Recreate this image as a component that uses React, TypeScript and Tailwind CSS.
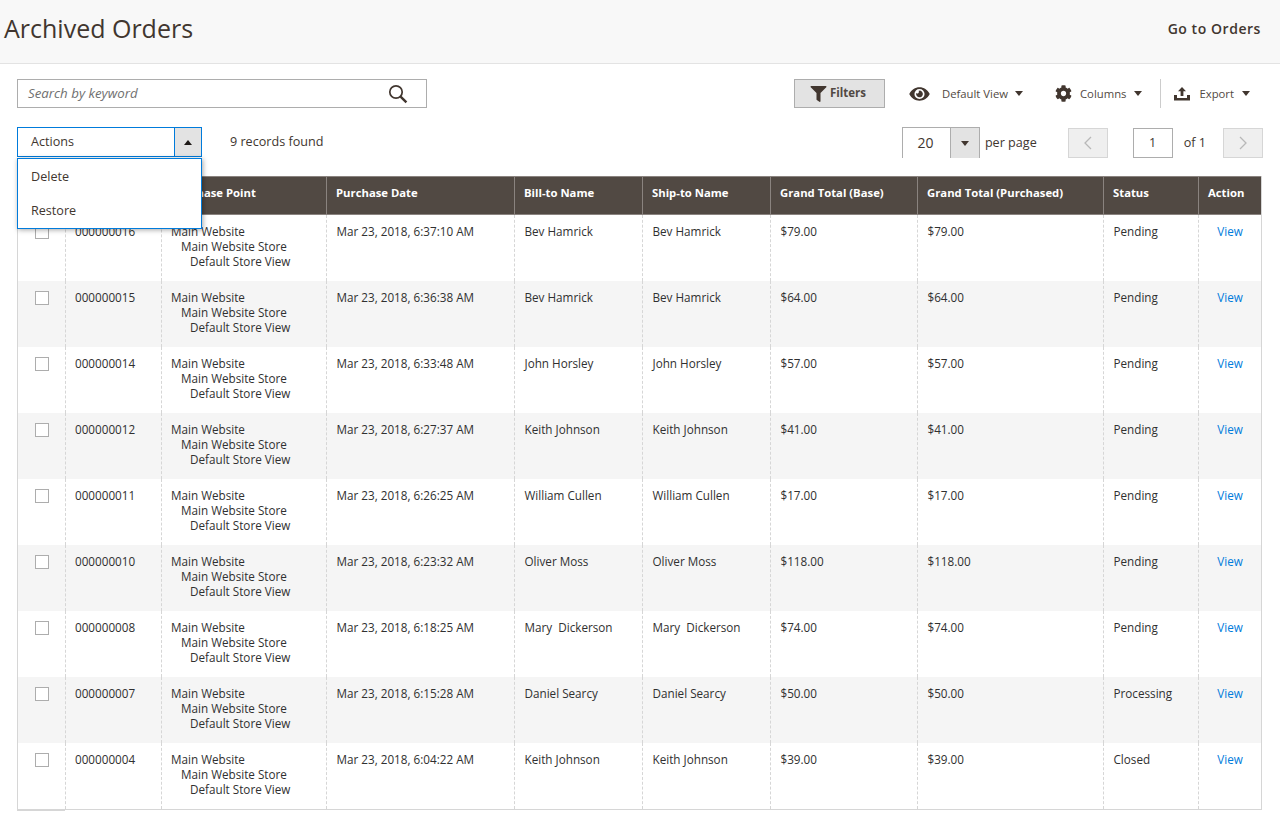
import { FaCog, FaEye, FaFilter } from "react-icons/fa";

const rows = [
  ["000000016", "Mar 23, 2018, 6:37:10 AM", "Bev Hamrick", "$79.00", "Pending"],
  ["000000015", "Mar 23, 2018, 6:36:38 AM", "Bev Hamrick", "$64.00", "Pending"],
  ["000000014", "Mar 23, 2018, 6:33:48 AM", "John Horsley", "$57.00", "Pending"],
  ["000000012", "Mar 23, 2018, 6:27:37 AM", "Keith Johnson", "$41.00", "Pending"],
  ["000000011", "Mar 23, 2018, 6:26:25 AM", "William Cullen", "$17.00", "Pending"],
  ["000000010", "Mar 23, 2018, 6:23:32 AM", "Oliver Moss", "$118.00", "Pending"],
  ["000000008", "Mar 23, 2018, 6:18:25 AM", "Mary  Dickerson", "$74.00", "Pending"],
  ["000000007", "Mar 23, 2018, 6:15:28 AM", "Daniel Searcy", "$50.00", "Processing"],
  ["000000004", "Mar 23, 2018, 6:04:22 AM", "Keith Johnson", "$39.00", "Closed"],
];

const headers = [
  "",
  "ID",
  "Purchase Point",
  "Purchase Date",
  "Bill-to Name",
  "Ship-to Name",
  "Grand Total (Base)",
  "Grand Total (Purchased)",
  "Status",
  "Action",
];

function Caret() {
  return (
    <span className="inline-block w-0 h-0 border-x-[4px] border-x-transparent border-t-[5px] border-t-[#41362f]" />
  );
}

function Cell({ children, tight }: { children?: React.ReactNode; tight?: boolean }) {
  return (
    <td
      className={`align-top pt-[9px] border-l border-dashed border-l-[#d6d6d6] whitespace-pre ${tight ? "px-[9px]" : "px-[9.5px]"}`}>
      {children}
    </td>
  );
}

export default function App() {
  return (
    <div
      className="w-[1280px] h-[834px] overflow-hidden bg-white text-[11.7px] leading-[15px] text-[#303030]"
      style={{ fontFamily: '"Open Sans", sans-serif' }}>
      <header className="h-[64px] bg-[#f8f8f8] border-b border-[#e3e3e3] flex items-center justify-between pl-[4px] pr-[19px]">
        <h1 className="text-[25px] leading-[38px] text-[#41362f] -mt-[7px]">
          Archived Orders
        </h1>
        <a className="text-[14px] font-semibold tracking-[0.55px] text-[#41362f] -mt-[6px]">
          Go to Orders
        </a>
      </header>

      <div className="px-[17px] pr-[18px]">
        <div className="flex items-center justify-between pt-[15px]">
          <div className="w-[410px] h-[29px] border border-[#adadad] flex items-center justify-between pl-[10px] pr-[18px]">
            <span className="italic text-[13.3px] text-[#707070]">
              Search by keyword
            </span>
            <svg width="20" height="20" viewBox="0 0 20 20" fill="none" stroke="#41362f">
              <circle cx="8" cy="8" r="6.2" strokeWidth="1.7" />
              <path d="M12.6 12.6 L18.4 18.4" strokeWidth="2.4" />
            </svg>
          </div>
          <div className="flex items-center text-[11.3px] text-[#41362f]">
            <button className="w-[91px] h-[29px] bg-[#e3e3e3] border border-[#adadad] flex items-center justify-center gap-[3px] pb-[2px] pr-[3px] font-bold text-[11.5px] text-[#514943]">
              <FaFilter className="w-[17px] h-[16px] mt-[2px] text-[#41362f]" />
              Filters
            </button>
            <FaEye className="ml-[24px] w-[21px] h-[18px] text-[#41362f]" />
            <span className="ml-[12px] text-[#514943]">Default View</span>
            <span className="ml-[7px] flex"><Caret /></span>
            <FaCog className="ml-[32px] w-[17px] h-[17px] text-[#41362f]" />
            <span className="ml-[8px] text-[#514943]">Columns</span>
            <span className="ml-[8px] flex"><Caret /></span>
            <span className="ml-[18px] w-px h-[29px] bg-[#cccccc]" />
            <svg className="ml-[13px]" width="16" height="14" viewBox="0 0 16 14" fill="#41362f">
              <path d="M8 0 L12 4.2 H9.4 V9 H6.6 V4.2 H4 Z" />
              <path d="M0 8 H3 V11 H13 V8 H16 V13.5 H0 Z" />
            </svg>
            <span className="ml-[9px] text-[#514943]">Export</span>
            <span className="ml-[8px] mr-[12px] flex"><Caret /></span>
          </div>
        </div>

        <div className="relative flex items-start justify-between mt-[19px] h-[31px]">
          <div className="flex items-center">
            <div className="w-[185px] h-[30px] border border-[#007bdb] flex">
              <span className="flex-1 pl-[13px] text-[12.6px] leading-[27px] text-[#41362f]">
                Actions
              </span>
              <span className="w-[27px] bg-[#e3e3e3] border-l border-[#007bdb] flex items-center justify-center">
                <span className="inline-block w-0 h-0 border-x-[4px] border-x-transparent border-b-[5px] border-b-[#1f1a17]" />
              </span>
            </div>
            <span className="ml-[28px] -mt-[1px] text-[12.6px] text-[#41362f]">
              9 records found
            </span>
          </div>

          <div className="absolute left-0 top-[31px] z-10 w-[185px] h-[71px] bg-white border border-[#007bdb] shadow-[1px_1px_5px_rgba(0,0,0,0.35)] py-[1px] text-[12.6px] text-[#41362f]">
            <div className="h-[34px] leading-[33px] pl-[13px]">Delete</div>
            <div className="h-[34px] leading-[33px] pl-[13px]">Restore</div>
          </div>

          <div className="flex items-center text-[12.6px] text-[#41362f] -mr-px">
            <div className="w-[78px] h-[31px] border border-[#adadad] border-b-0 flex">
              <span className="flex-1 text-center pr-[2px] leading-[30px] text-[14px]">20</span>
              <span className="w-[29px] bg-[#e3e3e3] border-l border-[#adadad] flex items-center justify-center">
                <Caret />
              </span>
            </div>
            <span className="ml-[5px]">per page</span>
            <button className="ml-[31px] w-[40px] h-[30px] bg-[#efefef] border border-[#d6d6d6] flex items-center justify-center">
              <svg width="9" height="14" viewBox="0 0 9 14" fill="none" stroke="#b8b8b8" strokeWidth="1.3">
                <path d="M8 1 L2 7 L8 13" />
              </svg>
            </button>
            <span className="ml-[25px] w-[40px] h-[30px] border border-[#adadad] text-center leading-[28px]">1</span>
            <span className="ml-[11px]">of 1</span>
            <button className="ml-[17px] w-[40px] h-[30px] bg-[#efefef] border border-[#d6d6d6] flex items-center justify-center">
              <svg width="9" height="14" viewBox="0 0 9 14" fill="none" stroke="#b8b8b8" strokeWidth="1.3">
                <path d="M1 1 L7 7 L1 13" />
              </svg>
            </button>
          </div>
        </div>

        <table className="mt-[18px] w-[1245px] table-fixed border-separate border-spacing-0 border-r border-b border-r-[#d6d6d6] border-b-[#d6d6d6]">
          <colgroup>
            <col className="w-[48px]" />
            <col className="w-[96px]" />
            <col className="w-[165px]" />
            <col className="w-[188px]" />
            <col className="w-[128px]" />
            <col className="w-[128px]" />
            <col className="w-[147px]" />
            <col className="w-[186px]" />
            <col className="w-[95px]" />
            <col className="w-[63px]" />
          </colgroup>
          <thead>
            <tr className="h-[39px] bg-[#514943] text-white text-left">
              {headers.map((h, i) => (
                <th
                  key={i}
                  className={`px-[9px] pb-[6px] font-bold text-[11.3px] border-y border-y-[#8a837f] ${i === 0 ? "" : "border-l border-l-[#8a837f]"}`}>
                  {h}
                </th>
              ))}
            </tr>
          </thead>
          <tbody>
            {rows.map((r, i) => (
              <tr key={r[0]} className={`h-[66px] ${i % 2 === 1 ? "bg-[#f5f5f5]" : "bg-white"}`}>
                <td className="relative align-top pt-[10px] border-l border-l-[#d6d6d6]">
                  <span className="block mx-auto w-[14px] h-[14px] bg-white border border-[#adadad]" />
                  {i === rows.length - 1 && (
                    <span className="absolute -left-px right-0 -bottom-[2px] h-px bg-[#d6d6d6]" />
                  )}
                </td>
                <Cell tight>{r[0]}</Cell>
                <Cell tight>
                  <div>Main Website</div>
                  <div className="pl-[10px]">Main Website Store</div>
                  <div className="pl-[19px]">Default Store View</div>
                </Cell>
                <Cell>{r[1]}</Cell>
                <Cell>{r[2]}</Cell>
                <Cell>{r[2]}</Cell>
                <Cell>{r[3]}</Cell>
                <Cell>{r[3]}</Cell>
                <Cell>{r[4]}</Cell>
                <td className="align-top pt-[9px] border-l border-dashed border-l-[#d6d6d6] text-center">
                  <a className="text-[#007bdb]">View</a>
                </td>
              </tr>
            ))}
          </tbody>
        </table>
      </div>
    </div>
  );
}
